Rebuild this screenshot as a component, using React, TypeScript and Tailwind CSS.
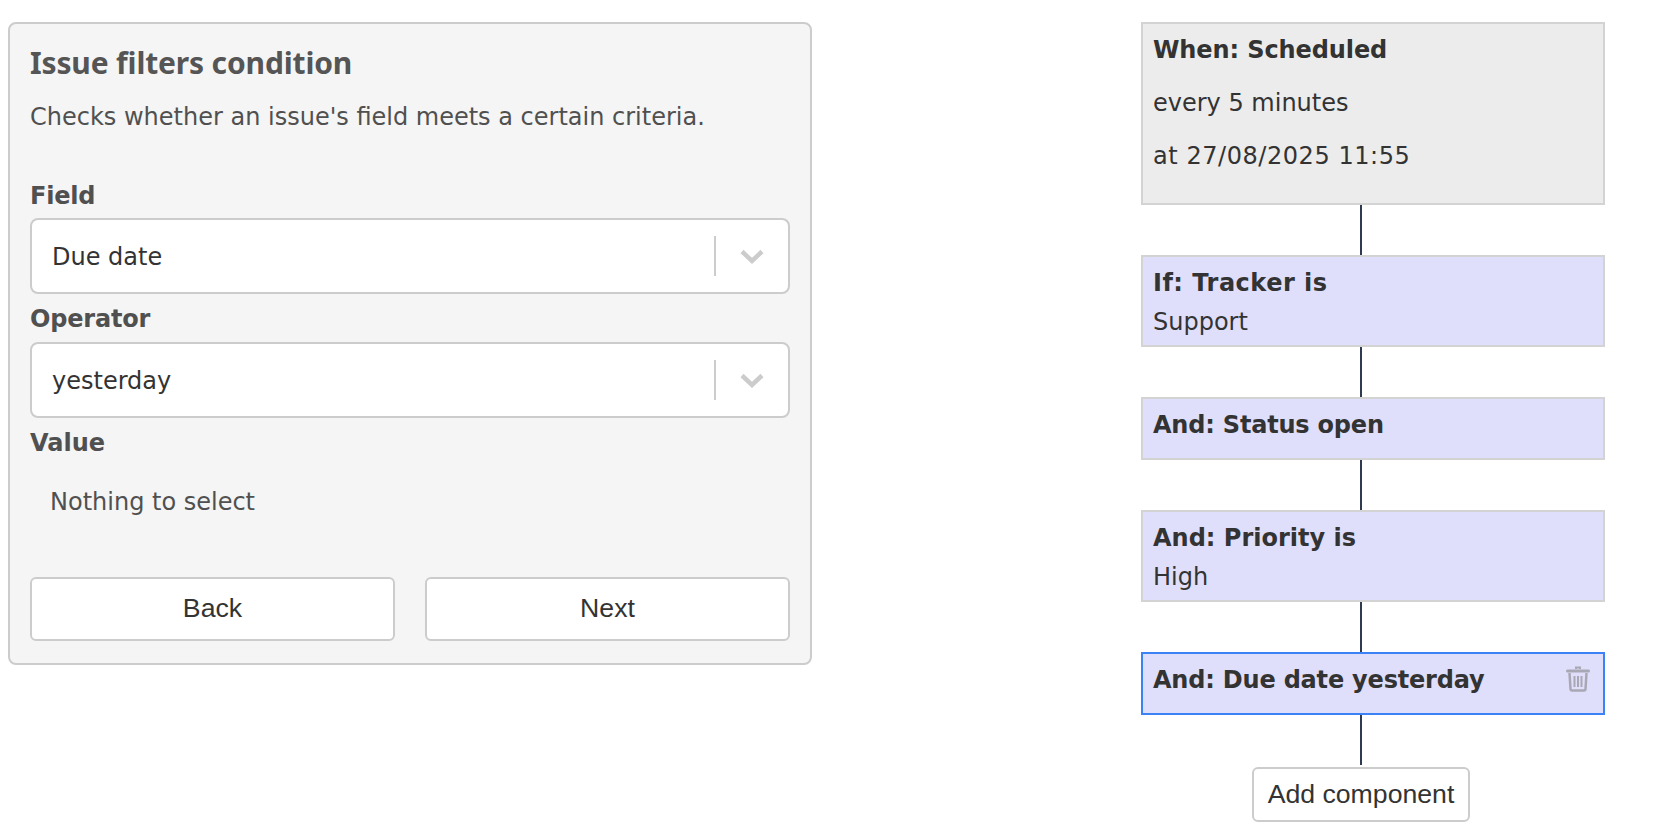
function Chevron() {
  return (
    <svg width="24" height="16" viewBox="0 0 24 16" fill="none" className="block">
      <path d="M2 2.5 L12 12 L22 2.5" stroke="#cccccc" strokeWidth="4.5" />
    </svg>
  )
}

function Trash() {
  return (
    <svg width="24" height="26" viewBox="0 0 24 26" fill="none" className="block">
      <path d="M10 3 V1.5 H14 V3" stroke="#a8a8b4" strokeWidth="2" />
      <path d="M1.5 5 H22.5" stroke="#a8a8b4" strokeWidth="3" strokeLinecap="round" />
      <path d="M3.5 7 L4.5 23 Q4.6 24.5 6 24.5 H18 Q19.4 24.5 19.5 23 L20.5 7" stroke="#a8a8b4" strokeWidth="2.5" />
      <path d="M8.5 10 V21 M12 10 V21 M15.5 10 V21" stroke="#a8a8b4" strokeWidth="2" />
    </svg>
  )
}

function Select({ value }: { value: string }) {
  return (
    <div className="flex items-center h-[76px] bg-white border-2 border-[#cccccc] rounded-[8px] pl-[20px]">
      <span className="flex-1 pt-[2px] text-[24px] text-[#333333]">{value}</span>
      <div className="w-[2px] h-[40px] bg-[#cccccc]" />
      <div className="w-[72px] pt-[2px] flex justify-center">
        <Chevron />
      </div>
    </div>
  )
}

function Connector({ className }: { className: string }) {
  return <div className={`w-[2px] ml-[219px] bg-[#2d3a4f] ${className}`} />
}

function Box({ title, titleClass, children, className }: { title: string; titleClass?: string; children?: React.ReactNode; className: string }) {
  return (
    <div className={`border-2 px-[10px] pt-[9px] text-[#333333] ${className}`}>
      <div className={`text-[24px] font-bold leading-[34px] ${titleClass ?? ''}`}>{title}</div>
      {children}
    </div>
  )
}

export default function App() {
  return (
    <div className="flex h-[838px] bg-white font-['DejaVu_Sans',sans-serif]">
      <div className="w-[804px] h-[643px] mt-[22px] ml-[8px] bg-[#f5f5f5] border-2 border-[#cccccc] rounded-[8px] px-[20px] pt-[14px] text-[#505050]">
        <h2 className="font-['Noto_Sans',sans-serif] font-bold text-[30px] leading-[50px] tracking-[-0.15px] text-[#555555]">Issue filters condition</h2>
        <p className="text-[24px] leading-[34px] mt-[12px]">Checks whether an issue's field meets a certain criteria.</p>

        <div className="font-bold text-[24px] leading-[34px] tracking-[-0.2px] mt-[45px] mb-[5px]">Field</div>
        <Select value="Due date" />
        <div className="font-bold text-[24px] leading-[34px] tracking-[-0.2px] mt-[8px] mb-[6px]">Operator</div>
        <Select value="yesterday" />
        <div className="font-bold text-[24px] leading-[34px] mt-[8px]">Value</div>
        <div className="text-[24px] leading-[34px] mt-[25px] pl-[20px]">Nothing to select</div>

        <div className="flex gap-[30px] mt-[58px]">
          <button className="flex-1 h-[64px] pb-[2px] bg-white border-2 border-[#cccccc] rounded-[6px] font-['Liberation_Sans',sans-serif] text-[26.67px] text-[#333333]">Back</button>
          <button className="flex-1 h-[64px] pb-[2px] bg-white border-2 border-[#cccccc] rounded-[6px] font-['Liberation_Sans',sans-serif] text-[26.67px] text-[#333333]">Next</button>
        </div>
      </div>

      <div className="w-[464px] mt-[22px] ml-[329px]">
        <Box title="When: Scheduled" titleClass="tracking-[-0.1px]" className="h-[183px] bg-[#ececec] border-[#d3d3d3]">
          <div className="text-[24px] leading-[34px] mt-[19px]">every 5 minutes</div>
          <div className="text-[24px] leading-[34px] mt-[19px] tracking-[0.55px]">at 27/08/2025 11:55</div>
        </Box>
        <Connector className="h-[50px]" />
        <Box title="If: Tracker is" titleClass="tracking-[0.5px]" className="h-[92px] bg-[#e0dffb] border-[#d3d3d3]">
          <div className="text-[24px] leading-[34px] mt-[5px]">Support</div>
        </Box>
        <Connector className="h-[50px]" />
        <Box title="And: Status open" titleClass="tracking-[-0.2px]" className="h-[63px] bg-[#e0dffb] border-[#d3d3d3]" />
        <Connector className="h-[50px]" />
        <Box title="And: Priority is" className="h-[92px] bg-[#e0dffb] border-[#d3d3d3]">
          <div className="text-[24px] leading-[34px] mt-[5px]">High</div>
        </Box>
        <Connector className="h-[50px]" />
        <div className="flex justify-between h-[63px] bg-[#e0dffb] border-2 border-[#3b82f6] pl-[10px] pr-[13px] pt-[9px] text-[#333333]">
          <div className="text-[24px] font-bold leading-[34px] tracking-[-0.2px]">And: Due date yesterday</div>
          <div className="mt-[3px]"><Trash /></div>
        </div>
        <Connector className="h-[50px]" />
        <button className="block mt-[2px] ml-[111px] w-[218px] h-[55px] pb-[2px] bg-white border-2 border-[#cccccc] rounded-[6px] font-['Liberation_Sans',sans-serif] text-[26.67px] text-[#333333]">Add component</button>
      </div>
    </div>
  )
}
